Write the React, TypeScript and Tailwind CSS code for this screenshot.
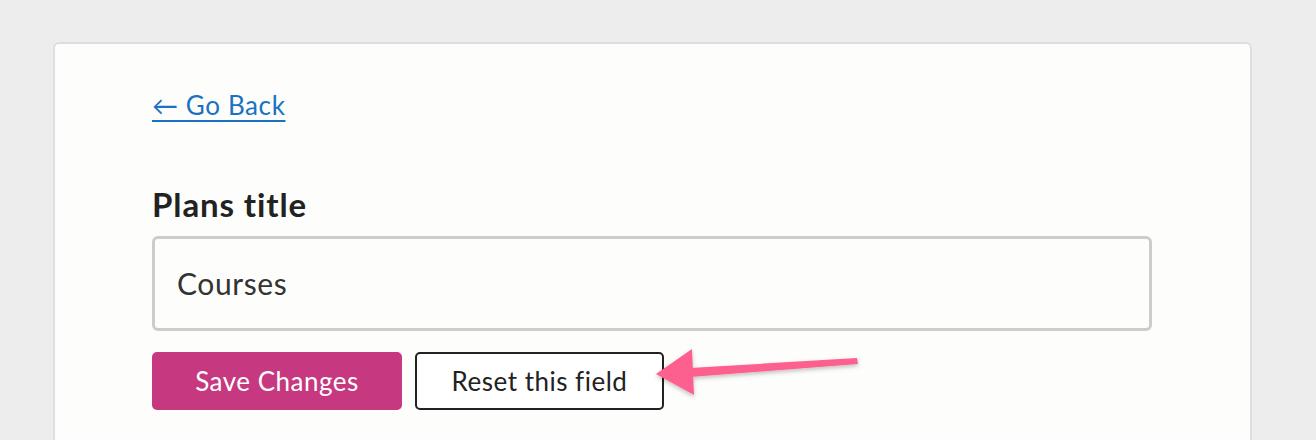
import React from "react";

export default function App() {
  return (
    <div className="min-h-[440px] w-[1316px] bg-[#ededed] pt-[42px] pl-[53px] overflow-hidden" style={{ fontFamily: "Lato, 'Noto Sans', sans-serif" }}>
      <div className="w-[1199px] h-[420px] rounded-[6px] border-2 border-[#dedede] bg-[#fdfdfc] pl-[97px] pt-[44px] relative">
        <a href="#" className="text-[26px] leading-[34px] tracking-[0.6px] text-[#1a73c0] underline underline-offset-[5px] decoration-[2px]">
          ← Go Back
        </a>
        <div className="mt-[62px] text-[33px] leading-[40px] font-bold tracking-[0.9px] text-[#222]">Plans title</div>
        <div className="mt-[12px] w-[1000px] h-[95px] rounded-[6px] border-[3px] border-[#cccccc] bg-[#fdfdfc] flex items-center pl-[22px] text-[30px] tracking-[0.6px] text-[#333]">
          Courses
        </div>
        <div className="mt-[21px] flex gap-[13px]">
          <button className="w-[250px] h-[58px] rounded-[5px] bg-[#c6387f] text-white text-[26px] tracking-[0.5px]">Save Changes</button>
          <button className="w-[249px] h-[58px] rounded-[5px] border-2 border-[#222] bg-white text-[#222] text-[26px] tracking-[0.5px]">Reset this field</button>
        </div>
        <svg className="absolute left-[585px] top-[296px]" width="230" height="70" viewBox="0 0 230 70">
          <defs>
            <filter id="sh" x="-20%" y="-50%" width="140%" height="200%">
              <feDropShadow dx="0" dy="2" stdDeviation="2" floodColor="#000" floodOpacity="0.25" />
            </filter>
          </defs>
          <g filter="url(#sh)" fill="#fd5f8e">
            <polygon points="217,18 218,24 50,37 50,28" />
            <polygon points="16,34 52,9 54,55" />
          </g>
        </svg>
      </div>
    </div>
  );
}
